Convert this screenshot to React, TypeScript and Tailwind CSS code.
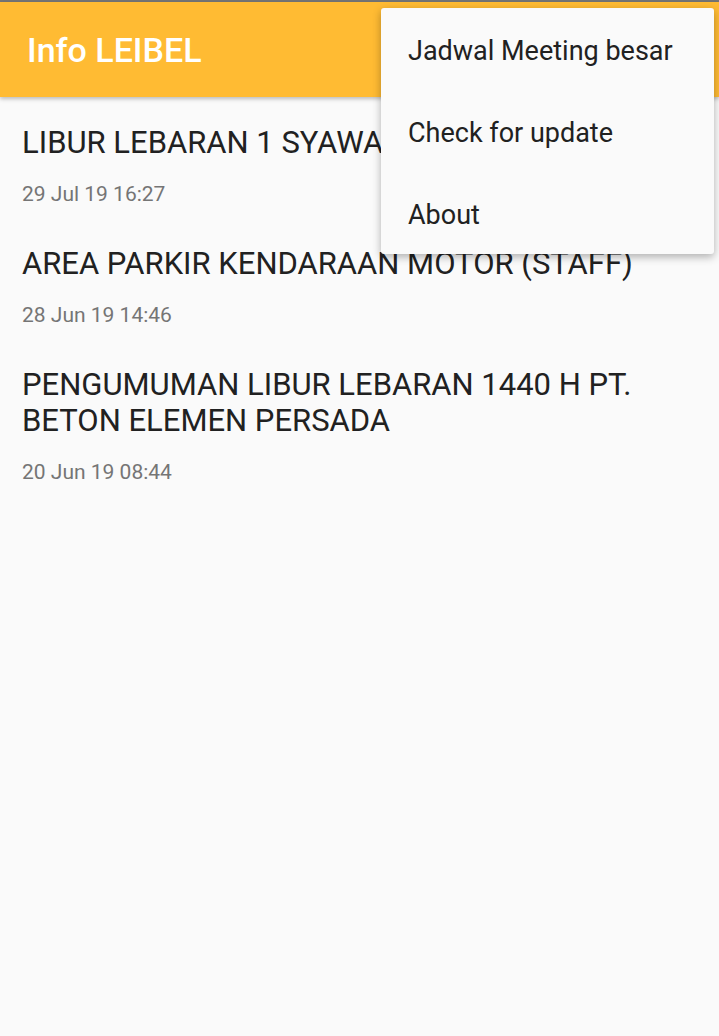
import React from "react";

const items = [
  { title: "LIBUR LEBARAN 1 SYAWAL 1440 H", date: "29 Jul 19 16:27" },
  { title: "AREA PARKIR KENDARAAN MOTOR (STAFF)", date: "28 Jun 19 14:46" },
  { title: "PENGUMUMAN LIBUR LEBARAN 1440 H PT. BETON ELEMEN PERSADA", date: "20 Jun 19 08:44" },
];

export default function App() {
  return (
    <div className="relative w-[719px] h-[1036px] overflow-hidden bg-[#fafafa]" style={{ fontFamily: "Roboto, 'Noto Sans', sans-serif" }}>
      <div className="h-[2px] bg-[#757575]" />
      <div className="h-[95px] bg-[#ffbb33] flex items-center px-[27px] shadow-[0_2px_4px_rgba(0,0,0,0.25)] relative z-10">
        <span className="text-white text-[34px] font-medium pt-[2px]">Info LEIBEL</span>
      </div>
      <div className="pt-[8px]">
        {items.map((it, i) => (
          <div key={i} className="px-[22px] py-[20px] flex flex-col gap-[21px]">
            <div className="text-[#212121] text-[31px] leading-[36px] pr-[60px]">{it.title}</div>
            <div className="text-[#757575] text-[21px] leading-[24px]">{it.date}</div>
          </div>
        ))}
      </div>
      <div className="absolute left-[381px] top-[8px] w-[333px] bg-[#fafafa] rounded-[3px] shadow-[0_3px_8px_rgba(0,0,0,0.3)] z-20 flex flex-col">
        {["Jadwal Meeting besar", "Check for update", "About"].map((t) => (
          <div key={t} className="h-[82px] flex items-center px-[27px] pt-[4px] text-[#212121] text-[27px]">{t}</div>
        ))}
      </div>
    </div>
  );
}
